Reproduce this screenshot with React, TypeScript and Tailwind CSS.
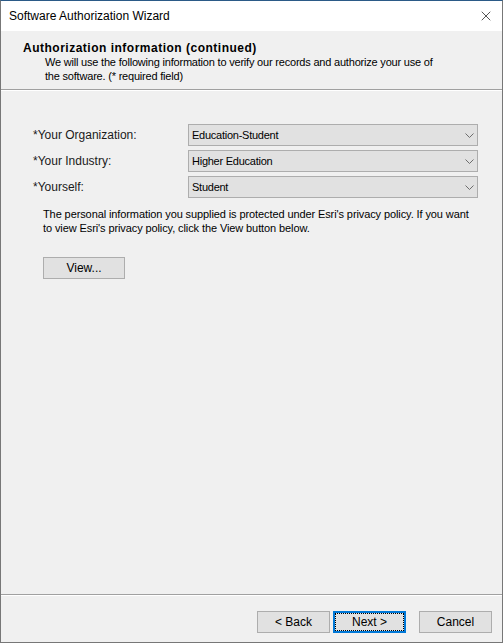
import { X } from "lucide-react";

const fieldRows = [
  { label: "*Your Organization:", value: "Education-Student" },
  { label: "*Your Industry:", value: "Higher Education" },
  { label: "*Yourself:", value: "Student" },
];

const Chevron = () => (
  <svg width="9" height="5" viewBox="0 0 9 5" className="shrink-0">
    <path d="M0.5 0.5 L4.5 4.5 L8.5 0.5" fill="none" stroke="#6d6d6d" strokeWidth="1" />
  </svg>
);

const WinButton = ({ label, focused, className }: { label: string; focused?: boolean; className?: string }) => (
  <button
    className={
      focused
        ? `flex h-[22px] items-center justify-center border-2 border-[#0078d7] bg-[#e1e1e1] text-[12px] text-black ${className ?? ""}`
        : `flex h-[22px] items-center justify-center border border-[#adadad] bg-[#e1e1e1] text-[12px] text-black ${className ?? ""}`
    }
  >
    {focused ? (
      <span className="flex h-full w-full items-center justify-center border border-dotted border-black">{label}</span>
    ) : (
      label
    )}
  </button>
);

export default function App() {
  return (
    <div
      className="flex h-[643px] w-[503px] flex-col border border-t-[#2b5a87] border-x-[#777777] border-b-[#777777] bg-[#f0f0f0] text-black"
      style={{ fontFamily: '"Liberation Sans", Arial, sans-serif' }}
    >
      {/* title bar */}
      <div className="flex h-[30px] shrink-0 items-center justify-between bg-white pl-[8px] pr-[8px]">
        <span className="text-[12px]">Software Authorization Wizard</span>
        <X size={16} strokeWidth={1} className="text-black" />
      </div>

      {/* header */}
      <div className="h-[58px] shrink-0 pl-[22px] pt-[11px]">
        <div className="text-[12px] font-bold leading-[13px] tracking-[0.5px]">Authorization information (continued)</div>
        <div className="whitespace-nowrap pl-[22px] text-[11px] leading-[14px] tracking-[-0.2px]">
          We will use the following information to verify our records and authorize your use of
          <br />
          the software. (* required field)
        </div>
      </div>
      <div className="h-px shrink-0 bg-[#a0a0a0]" />
      <div className="h-px shrink-0 bg-white" />

      {/* body */}
      <div className="flex flex-1 flex-col pl-[32px] pt-[33px]">
        <div className="flex flex-col gap-[4px]">
          {fieldRows.map((row) => (
            <div key={row.label} className="flex items-center">
              <span className="w-[155px] text-[12px] text-[#1a1a1a]">{row.label}</span>
              <div className="flex h-[22px] w-[290px] items-center justify-between border border-[#adadad] bg-[#e1e1e1] pl-[3px] pr-[3px]">
                <span className="text-[11px] tracking-[-0.25px]">{row.value}</span>
                <Chevron />
              </div>
            </div>
          ))}
        </div>

        <p className="mt-[9px] whitespace-nowrap pl-[10px] text-[11px] leading-[14px] tracking-[-0.1px]">
          The personal information you supplied is protected under Esri's privacy policy. If you want
          <br />
          to view Esri's privacy policy, click the View button below.
        </p>

        <div className="mt-[22px] pl-[10px]">
          <WinButton label="View..." className="w-[82px]" />
        </div>
      </div>

      {/* footer */}
      <div className="h-px shrink-0 bg-[#a0a0a0]" />
      <div className="h-px shrink-0 bg-white" />
      <div className="flex h-[46px] shrink-0 items-start justify-end gap-[3px] pr-[10px] pt-[15px]">
        <WinButton label="< Back" className="w-[73px]" />
        <WinButton label="Next >" focused className="w-[73px]" />
        <WinButton label="Cancel" className="ml-[10px] w-[73px]" />
      </div>
    </div>
  );
}
